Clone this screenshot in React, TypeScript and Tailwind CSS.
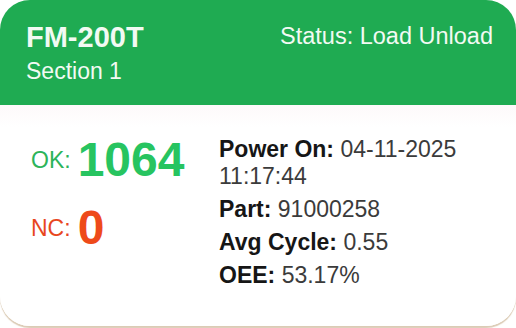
import React from "react";

const font = { fontFamily: '"Liberation Sans", Arial, sans-serif' };

function Row({ label, children }: { label: string; children: React.ReactNode }) {
  return (
    <div className="text-[23px] leading-[27px] text-[#3b3b3b]">
      <span className="font-bold text-[#161616]">{label}</span> {children}
    </div>
  );
}

export default function App() {
  return (
    <div className="w-[516px] h-[328px] bg-white" style={font}>
      <div className="w-[516px] h-[326px] rounded-[30px] overflow-hidden bg-white flex flex-col shadow-[0_1.5px_1px_rgba(190,160,120,0.55)]">
        <div className="h-[105px] bg-[#1fab52] flex justify-between pl-[26px] pr-[23px] pt-[20px] text-[#f2faf3]">
          <div className="flex flex-col">
            <div className="text-[29px] leading-[34px] font-bold">FM-200T</div>
            <div className="text-[23px] leading-[27px] mt-[4px]">Section 1</div>
          </div>
          <div className="text-[23.5px] leading-[27px] pt-[3px]">Status: Load Unload</div>
        </div>
        <div className="flex-1 flex bg-gradient-to-b from-[#fdf9fa] to-white to-[10%]">
          <div className="w-[188px] pl-[31px] pt-[26px] flex flex-col gap-[10px]">
            <div className="flex items-center gap-[7px] h-[58px]">
              <span className="text-[23px] text-[#2cb45a]">OK:</span>
              <span className="text-[48px] font-bold text-[#27c460] leading-none">1064</span>
            </div>
            <div className="flex items-center gap-[7px] h-[58px]">
              <span className="text-[23px] text-[#e8471e]">NC:</span>
              <span className="text-[48px] font-bold text-[#ee4a1a] leading-none">0</span>
            </div>
          </div>
          <div className="flex flex-col gap-[6px] pl-[31px] pt-[31px]">
            <Row label="Power On:">
              04-11-2025
              <br />
              11:17:44
            </Row>
            <Row label="Part:">91000258</Row>
            <Row label="Avg Cycle:">0.55</Row>
            <Row label="OEE:">53.17%</Row>
          </div>
        </div>
      </div>
    </div>
  );
}
